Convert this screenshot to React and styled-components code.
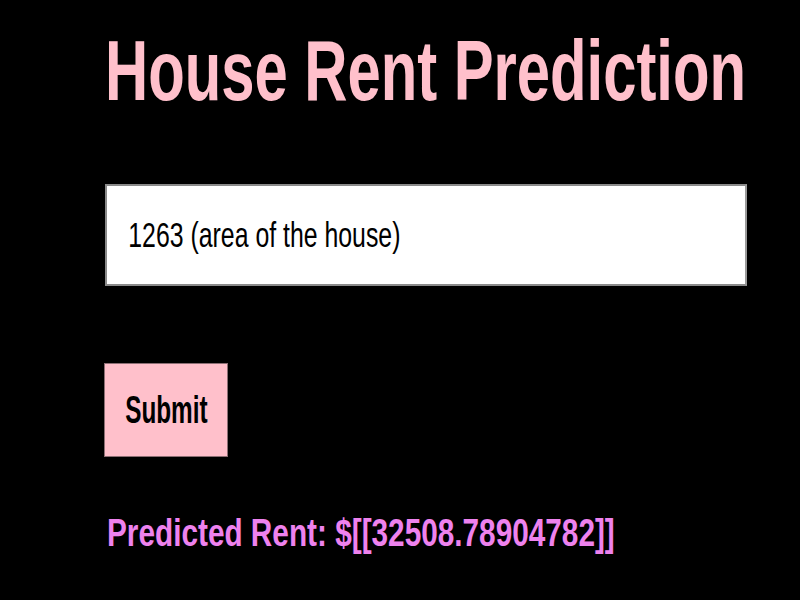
import React from 'react'
import styled, { createGlobalStyle } from 'styled-components'

const GlobalStyle = createGlobalStyle`
  html, body {
    margin: 0;
    padding: 0;
    background: #000;
  }
  body {
    font-family: "Liberation Sans", Arial, sans-serif;
  }
`

const Page = styled.main`
  display: flex;
  flex-direction: column;
  align-items: flex-start;
  min-height: 100vh;
  padding: 27px 0 0 105px;
  box-sizing: border-box;
  background: #000;
  overflow: hidden;
`

// narrow lettering: glyphs are squeezed sideways from the left edge
const Squeeze = styled.span`
  display: inline-block;
  white-space: nowrap;
  transform: scaleX(${(p) => p.$sx});
  transform-origin: ${(p) => p.$origin || 'left center'};
`

const Title = styled.h1`
  width: 642px;
  margin: 0;
  height: 86px;
  font-size: 86px;
  line-height: 86px;
  font-weight: 700;
  color: #ffc0cb;
`

const Form = styled.form`
  display: flex;
  flex-direction: column;
  align-items: flex-start;
  margin-top: 71px;
`

const Field = styled.label`
  display: flex;
  align-items: center;
  width: 642px;
  height: 102px;
  box-sizing: border-box;
  border: 2px solid #8a8a8a;
  border-right-color: #9a9a9a;
  background: #fff;
  overflow: hidden;
`

const Input = styled.input`
  flex: none;
  width: 870px;
  height: 100%;
  padding: 0 0 0 30px;
  margin: 0;
  border: none;
  outline: none;
  background: transparent;
  font-family: "Liberation Sans", Arial, sans-serif;
  font-size: 35px;
  color: #000;
  transform: scaleX(0.71);
  transform-origin: left center;
`

const Button = styled.button`
  display: flex;
  align-items: center;
  justify-content: center;
  width: 124px;
  height: 94px;
  margin-top: 77px;
  margin-left: -1px;
  padding: 0;
  box-sizing: border-box;
  border: 1px solid #8c6f74;
  background: #ffc0cb;
  color: #000;
  font-family: "Liberation Sans", Arial, sans-serif;
  font-size: 38px;
  font-weight: 700;
  cursor: pointer;
`

const Result = styled.p`
  width: 642px;
  margin: 56px 0 0 2px;
  font-size: 39px;
  line-height: 39px;
  font-weight: 700;
  color: #ee82ee;
`

function App() {
  const prediction = '[[32508.78904782]]'

  return (
    <>
      <GlobalStyle />
      <Page>
        <Title>
          <Squeeze $sx={0.695}>House Rent Prediction</Squeeze>
        </Title>
        <Form onSubmit={(e) => e.preventDefault()}>
          <Field>
            <Input type="text" defaultValue="1263 (area of the house)" />
          </Field>
          <Button type="submit">
            <Squeeze $sx={0.64} $origin="center">Submit</Squeeze>
          </Button>
        </Form>
        <Result>
          <Squeeze $sx={0.763}>Predicted Rent: ${prediction}</Squeeze>
        </Result>
      </Page>
    </>
  )
}

export default App
